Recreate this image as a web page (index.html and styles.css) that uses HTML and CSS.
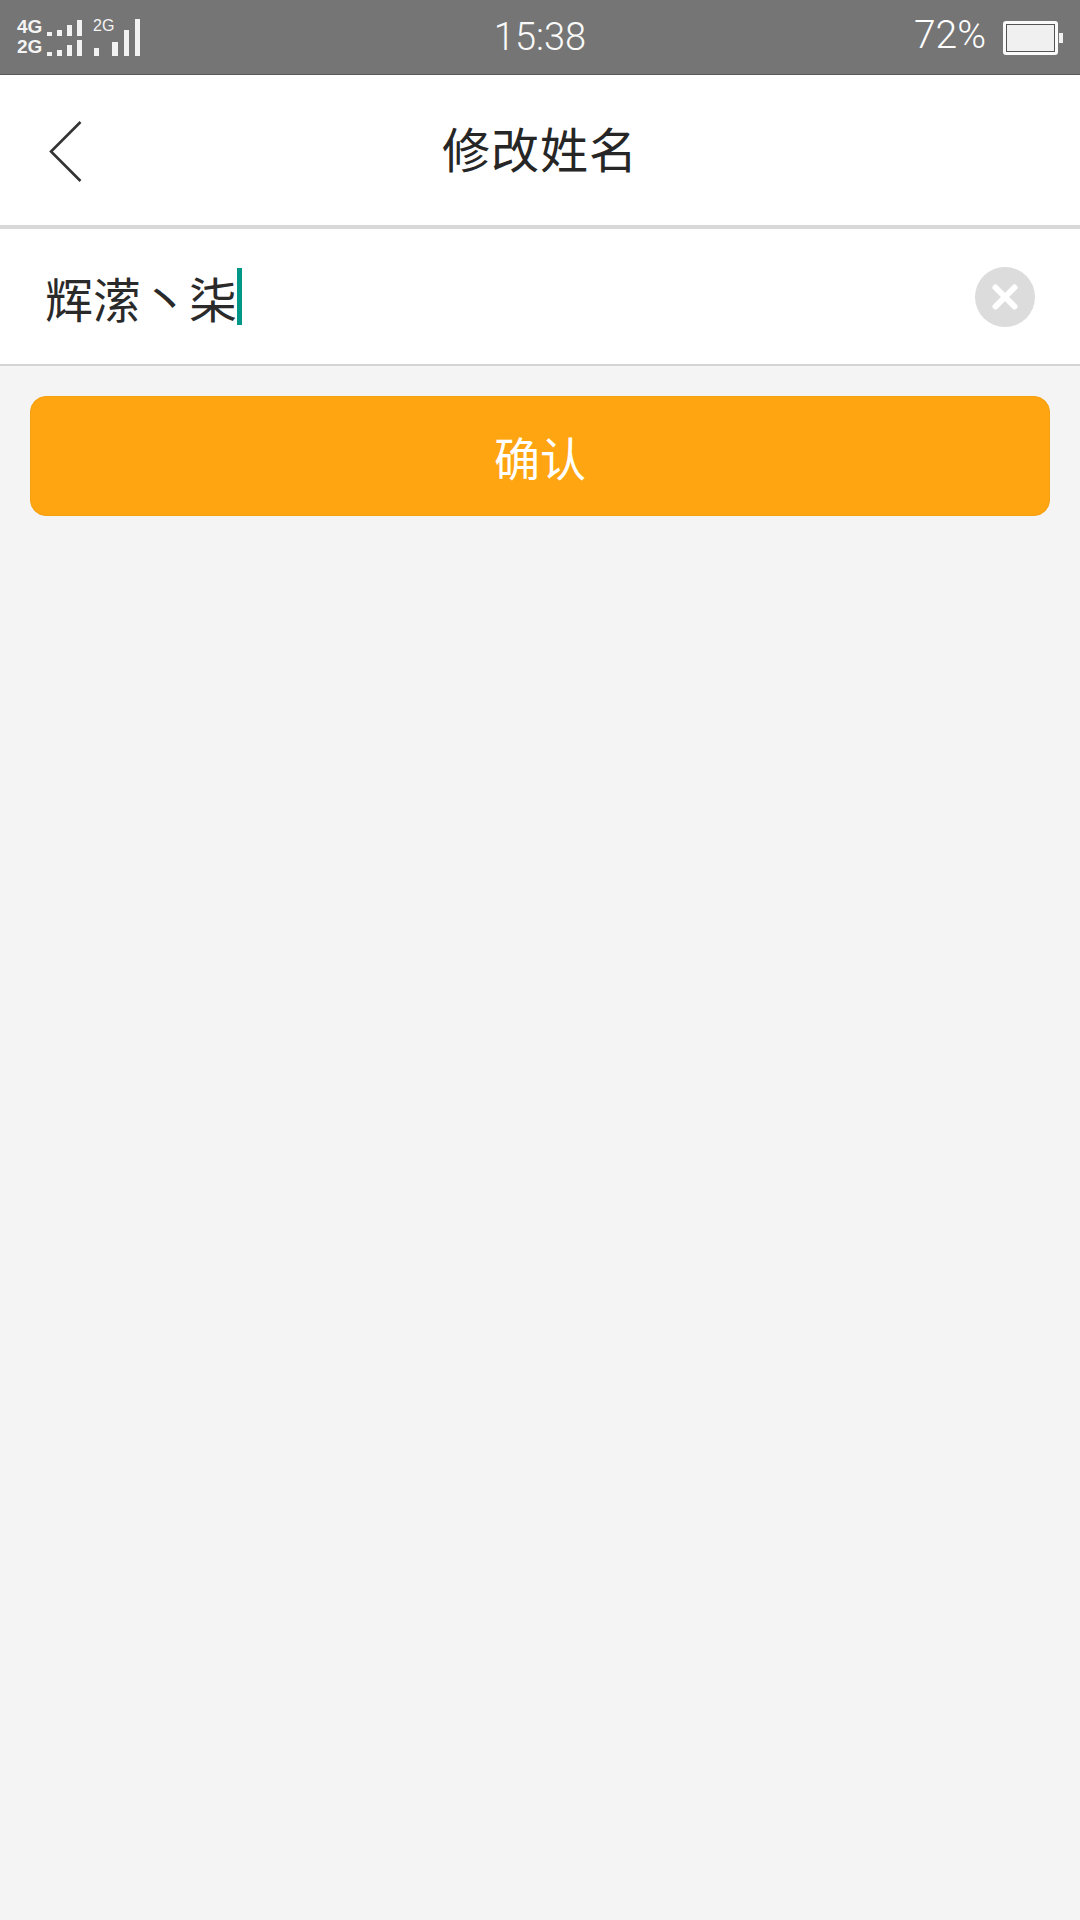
FILE: index.html
```html
<!DOCTYPE html>
<html lang="zh-CN">
<head>
<meta charset="utf-8">
<title>修改姓名</title>
<link rel="stylesheet" href="styles.css">
</head>
<body>
<div class="statusbar">
  <div class="signals">
    <div class="sim">
      <div class="sim-row"><span class="net">4G</span><span class="bars"><i class="b1"></i><i class="b2"></i><i class="b3"></i><i class="b4"></i></span></div>
      <div class="sim-row"><span class="net">2G</span><span class="bars"><i class="b1"></i><i class="b2"></i><i class="b3"></i><i class="b4"></i></span></div>
    </div>
    <div class="sim2">
      <span class="net2">2G</span>
      <span class="bigbars"><i class="g1"></i><i class="g2"></i><i class="g3"></i><i class="g4"></i></span>
    </div>
  </div>
  <div class="time">15:38</div>
  <div class="status-right">
    <span class="pct">72%</span>
    <span class="battery"><span class="battery-level"></span></span>
    <span class="battery-tip"></span>
  </div>
</div>
<header class="nav">
  <svg class="back" width="34" height="64" viewBox="0 0 34 64"><path d="M31.5 2 L2 31.5 L31.5 61" fill="none" stroke="#333" stroke-width="2.6"/></svg>
  <h1 class="title">修改姓名</h1>
</header>
<div class="field">
  <div class="value"><span>辉潆丶柒</span><span class="caret"></span></div>
  <svg class="clear" width="60" height="60" viewBox="0 0 60 60"><circle cx="30" cy="30" r="30" fill="#dcdcdc"/><path d="M20.5 20.5 L39.5 39.5 M39.5 20.5 L20.5 39.5" stroke="#fff" stroke-width="6" stroke-linecap="round"/></svg>
</div>
<main class="content">
  <button class="confirm">确认</button>
</main>
</body>
</html>
```
FILE: styles.css
```css
* { box-sizing: border-box; }
html, body { margin: 0; padding: 0; }
body {
  width: 1080px;
  height: 1920px;
  background: #f4f4f4;
  font-family: "Noto Sans CJK SC", "Liberation Sans", sans-serif;
  display: flex;
  flex-direction: column;
  overflow: hidden;
}
.statusbar {
  height: 75px;
  flex: none;
  background: #757575;
  border-bottom: 1px solid #595959;
  display: grid;
  grid-template-columns: 1fr auto 1fr;
  align-items: center;
  color: #fff;
  padding: 0 17px 0 17px;
}
.signals { display: flex; gap: 11px; align-items: flex-end; height: 38px; margin-top: 0; }
.sim { display: flex; flex-direction: column; gap: 2px; }
.sim-row { display: flex; align-items: flex-end; height: 18px; gap: 2px; }
.net {
  font-family: "Liberation Sans", sans-serif;
  font-weight: 700;
  font-size: 19px;
  line-height: 18px;
  width: 28px;
  color: #f4f4f4;
}
.bars { display: flex; align-items: flex-end; gap: 5px; height: 16px; }
.bars i { display: block; width: 5px; background: #f2f2f2; }
.bars .b1 { height: 4px; }
.bars .b2 { height: 6px; }
.bars .b3 { height: 11px; }
.bars .b4 { height: 16px; }
.sim2 { position: relative; width: 47px; height: 38px; }
.net2 {
  position: absolute;
  left: 0;
  top: 0;
  font-family: "Liberation Sans", sans-serif;
  font-size: 16px;
  line-height: 16px;
  color: #f4f4f4;
}
.bigbars { position: absolute; inset: 0; display: flex; align-items: flex-end; gap: 6px; padding-left: 1px; }
.bigbars i { display: block; width: 6px; background: #f2f2f2; }
.bigbars .g1 { height: 8px; }
.bigbars .g2 { height: 14px; margin-left: 7px; }
.bigbars .g3 { height: 26px; }
.bigbars .g4 { height: 37px; }
.time {
  font-family: Roboto, "Liberation Sans", sans-serif;
  font-weight: 300;
  font-size: 38px;
  letter-spacing: 0;
  color: #fafafa;
}
.status-right { display: flex; align-items: center; justify-content: flex-end; }
.pct {
  font-family: Roboto, "Liberation Sans", sans-serif;
  font-weight: 300;
  font-size: 39px;
  margin-right: 17px;
  position: relative;
  top: -2px;
}
.battery {
  width: 55px;
  height: 34px;
  border: 3px solid #fafafa;
  border-radius: 3px;
  padding: 1px;
  display: flex;
  margin-top: 2px;
  box-shadow: inset 0 0 0 1px #555;
}
.battery-level { flex: 1; background: #f0f0f0; }
.battery-tip { width: 4px; height: 10px; background: #f0f0f0; margin-left: 1px; margin-top: 2px; }
.nav {
  height: 154px;
  flex: none;
  background: #fff;
  border-bottom: 4px solid #d8d8d8;
  position: relative;
  display: flex;
  align-items: center;
  justify-content: center;
}
.back { position: absolute; left: 49px; top: 45px; }
.title {
  margin: 0;
  font-weight: 400;
  font-size: 48px;
  letter-spacing: 1px;
  color: #262626;
  line-height: 1;
  position: relative;
  top: -3px;
}
.field {
  height: 137px;
  flex: none;
  background: #fff;
  border-bottom: 2px solid #d4d4d4;
  display: flex;
  align-items: center;
  justify-content: space-between;
  padding: 0 45px 0 45px;
}
.value {
  display: flex;
  align-items: center;
  font-size: 48px;
  color: #2a2a2a;
  line-height: 1;
}
.caret { width: 5px; height: 57px; background: #009688; margin-left: 0; }
.content { flex: 1; padding: 30px; }
.confirm {
  display: block;
  width: 100%;
  height: 120px;
  border: 1px solid #f5a00f;
  border-radius: 16px;
  background: #ffa511;
  color: #fff;
  font-family: inherit;
  font-size: 46px;
  padding: 0;
}
```
